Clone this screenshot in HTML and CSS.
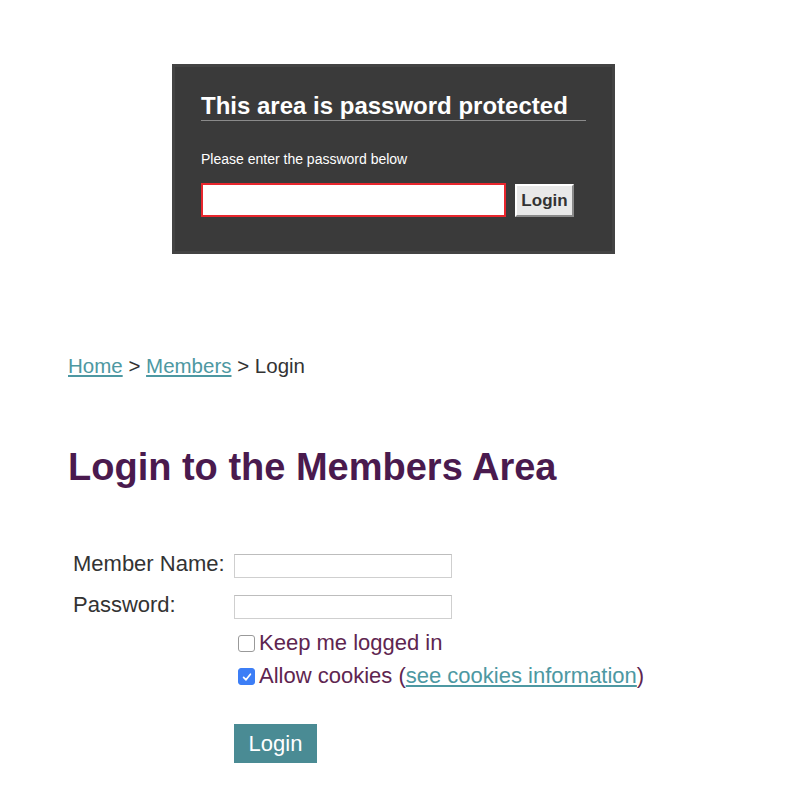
FILE: index.html
```html
<!DOCTYPE html>
<html lang="en">
<head>
<meta charset="utf-8">
<title>Login to the Members Area</title>
<link rel="stylesheet" href="styles.css">
</head>
<body>
<div class="page">
  <section class="protect">
    <h2 class="protect-title">This area is password protected</h2>
    <p class="protect-text">Please enter the password below</p>
    <div class="protect-row">
      <input class="protect-input" type="password">
      <button class="protect-btn" type="button">Login</button>
    </div>
  </section>

  <nav class="crumbs"><a href="#">Home</a> &gt; <a href="#">Members</a> &gt; Login</nav>

  <h1 class="title">Login to the Members Area</h1>

  <form class="login">
    <div class="row">
      <label class="lbl">Member Name:</label>
      <input class="field" type="text">
    </div>
    <div class="row row-pw">
      <label class="lbl">Password:</label>
      <input class="field" type="password">
    </div>
    <div class="opts">
      <div class="opt"><span class="box"></span>Keep me logged in</div>
      <div class="opt"><span class="box on"><svg width="12" height="12" viewBox="0 0 12 12"><path d="M2.6 6.4 L5 8.8 L9.4 3.2" fill="none" stroke="#fff" stroke-width="1.7" stroke-linecap="round" stroke-linejoin="round"/></svg></span>Allow cookies (<a href="#">see cookies information</a>)</div>
    </div>
    <div class="submit-wrap"><button class="submit" type="button">Login</button></div>
  </form>
</div>
</body>
</html>
```
FILE: styles.css
```css
* { box-sizing: border-box; }
html, body { margin: 0; padding: 0; background: #fff; }
body { font-family: "Liberation Sans", Arial, Helvetica, sans-serif; color: #333; }

.page { padding-top: 64px; }

.protect {
  margin-left: 172px;
  width: 443px;
  background: #3a3a3a;
  border: 3px solid #434343;
  padding: 25px 26px 34px;
}
.protect-title {
  margin: 0;
  font-size: 24px;
  line-height: 28px;
  font-weight: bold;
  color: #fff;
  padding-bottom: 0;
  border-bottom: 1px solid #8a8a8a;
}
.protect-text {
  margin: 30px 0 0;
  font-size: 14px;
  line-height: 16px;
  color: #fff;
}
.protect-row {
  margin-top: 16px;
  display: flex;
  align-items: flex-start;
  gap: 9px;
}
.protect-input {
  width: 305px;
  height: 34px;
  border: 2px solid #e8262d;
  background: #fff;
  margin: 0;
  padding: 0 4px;
  outline: none;
}
.protect-btn {
  margin: 1px 0 0;
  width: 59px;
  height: 33px;
  padding: 0;
  font-family: inherit;
  font-size: 17px;
  font-weight: bold;
  color: #333;
  background: #e9e9e9;
  border: 2px solid;
  border-color: #fff #8a8a8a #8a8a8a #fff;
}

.crumbs {
  margin: 100px 0 0 68px;
  font-size: 20.5px;
  line-height: 24px;
  color: #333;
}
.crumbs a, .opt a { color: #4d98a2; }

.title {
  margin: 67px 0 0 68px;
  font-size: 38px;
  line-height: 44px;
  font-weight: bold;
  color: #4a1a4e;
}

.login { margin: 63px 0 0 73px; }
.row {
  display: flex;
  align-items: flex-start;
}
.row-pw { margin-top: 15px; }
.lbl {
  width: 161px;
  font-size: 22px;
  line-height: 24px;
  color: #333;
}
.field {
  margin: 2px 0 0;
  width: 218px;
  height: 24px;
  border: 1px solid #cfcfcf;
  border-top-color: #bdbdbd;
  background: #fff;
  padding: 0 4px;
}

.opts {
  margin: 7px 0 0 161px;
  font-size: 22px;
  line-height: 33px;
  color: #5e2550;
}
.opt { display: flex; align-items: center; white-space: nowrap; }
.box {
  flex: none;
  display: inline-flex;
  align-items: center;
  justify-content: center;
  width: 17px;
  height: 17px;
  margin: 2px 4px 0 4px;
  border: 1px solid #9a9a9a;
  border-radius: 3px;
  background: #fff;
}
.box.on { background: #3c7ef6; border-color: #3c7ef6; }

.submit-wrap { margin: 32px 0 0 161px; }
.submit {
  width: 83px;
  height: 39px;
  margin: 0;
  padding: 0;
  border: none;
  background: #4a8b94;
  color: #fff;
  font-family: inherit;
  font-size: 22px;
}
```
